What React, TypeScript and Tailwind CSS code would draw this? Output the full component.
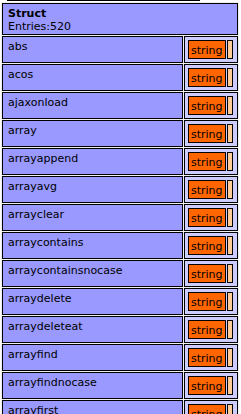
import React from "react";

const keys = [
  "abs",
  "acos",
  "ajaxonload",
  "array",
  "arrayappend",
  "arrayavg",
  "arrayclear",
  "arraycontains",
  "arraycontainsnocase",
  "arraydelete",
  "arraydeleteat",
  "arrayfind",
  "arrayfindnocase",
  "arrayfirst",
];

export default function App() {
  return (
    <div className="w-[241px] h-[414px] overflow-hidden bg-white font-['DejaVu_Sans',sans-serif] text-[11px] leading-[13px] text-black">
      <div className="h-px ml-[7px] w-[193px] bg-black" />
      <div className="mt-px ml-px w-[238px] grid grid-cols-[181px_54px] gap-px p-px bg-[#eeeeee]">
        <div className="col-span-2 border border-black bg-[#9999ff] pl-[5px] pr-[2px] pt-[3px] pb-[1px]">
          <div className="font-bold">Struct</div>
          <div>Entries:520</div>
        </div>
        {keys.map((k) => (
          <React.Fragment key={k}>
            <div className="border border-black bg-[#9999ff] pl-[5px] pr-[2px] pt-[3px] pb-[1px]">{k}</div>
            <div className="border border-black bg-[#ccccff] p-[2px]">
              <div className="flex gap-px p-px">
                <div className="border border-black bg-[#ff6600] px-[2px] pt-[3px] pb-[1px]">string</div>
                <div className="border border-black bg-[#ffcc99] w-[6px]" />
              </div>
            </div>
          </React.Fragment>
        ))}
      </div>
    </div>
  );
}
